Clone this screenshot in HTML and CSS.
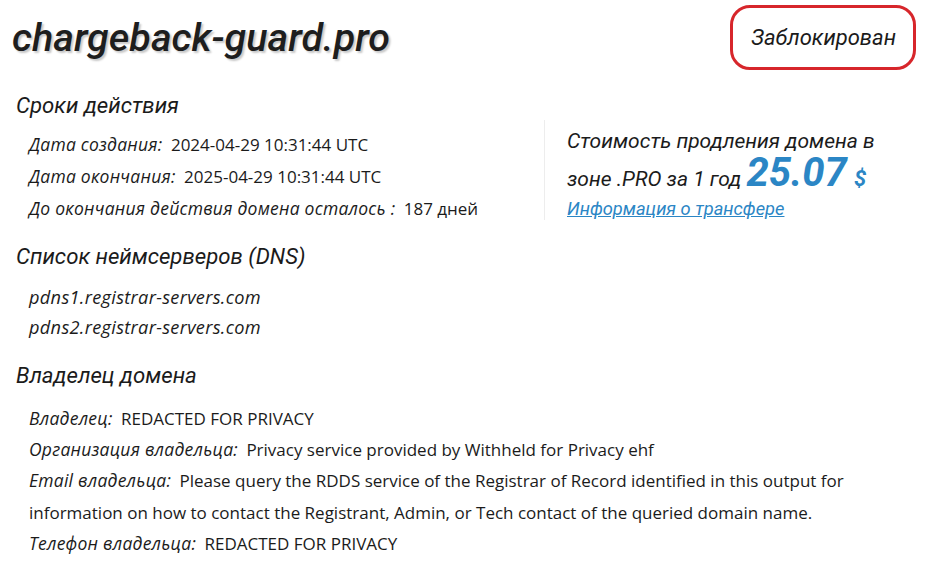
FILE: index.html
```html
<!DOCTYPE html>
<html lang="ru">
<head>
<meta charset="utf-8">
<title>chargeback-guard.pro</title>
<link rel="stylesheet" href="styles.css">
</head>
<body>
<div class="page">
  <header class="top">
    <h1 class="domain">chargeback-guard.pro</h1>
    <div class="status">Заблокирован</div>
  </header>

  <section class="terms">
    <div class="terms-main">
      <h2 class="heading">Сроки действия</h2>
      <div class="rows">
        <div class="row"><span class="label">Дата создания:</span> <span class="value">2024-04-29 10:31:44 UTC</span></div>
        <div class="row"><span class="label">Дата окончания:</span> <span class="value">2025-04-29 10:31:44 UTC</span></div>
        <div class="row"><span class="label">До окончания действия домена осталось :</span> <span class="value">187 дней</span></div>
      </div>
    </div>
    <aside class="price">
      <p class="price-text">Стоимость продления домена в зоне .PRO за 1 год <span class="amount">25.07</span> <span class="currency">$</span></p>
      <a class="transfer" href="#">Информация о трансфере</a>
    </aside>
  </section>

  <section class="block">
    <h2 class="heading">Список неймсерверов (DNS)</h2>
    <div class="rows ns">
      <div class="row label">pdns1.registrar-servers.com</div>
      <div class="row label">pdns2.registrar-servers.com</div>
    </div>
  </section>

  <section class="block owner-block">
    <h2 class="heading">Владелец домена</h2>
    <div class="rows owner">
      <div class="row"><span class="label">Владелец:</span> <span class="value">REDACTED FOR PRIVACY</span></div>
      <div class="row"><span class="label">Организация владельца:</span> <span class="value">Privacy service provided by Withheld for Privacy ehf</span></div>
      <div class="row"><span class="label">Email владельца:</span> <span class="value">Please query the RDDS service of the Registrar of Record identified in this output for information on how to contact the Registrant, Admin, or Tech contact of the queried domain name.</span></div>
      <div class="row"><span class="label">Телефон владельца:</span> <span class="value">REDACTED FOR PRIVACY</span></div>
    </div>
  </section>
</div>
</body>
</html>
```
FILE: styles.css
```css
* { box-sizing: border-box; }
html, body { margin: 0; padding: 0; background: #fff; }
body {
  color: #1b1b1b;
  font-family: "Open Sans", "DejaVu Sans", sans-serif;
  font-size: 17px;
}
.page { width: 946px; padding: 0 12px 0 12px; }

.top {
  display: flex;
  justify-content: space-between;
  align-items: center;
  padding-top: 5px;
  padding-right: 18px;
}
.domain {
  margin: 0;
  font-family: "Roboto", sans-serif;
  font-style: italic;
  font-weight: 500;
  font-size: 39.5px;
  line-height: 1;
  color: #1e1e1e;
  text-shadow: 2px 2px 2px rgba(0,0,0,0.22);
}
.status {
  height: 65px;
  padding: 0 17px 0 18px;
  display: flex;
  align-items: center;
  border: 3px solid #d7262b;
  border-radius: 20px;
  font-family: "Roboto", sans-serif;
  font-style: italic;
  font-size: 22px;
}

.heading {
  margin: 0;
  font-family: "Roboto", sans-serif;
  font-style: italic;
  font-weight: 400;
  font-size: 22.2px;
  line-height: 30px;
  padding-left: 4px;
}
.label {
  font-family: "Open Sans", sans-serif;
  font-style: italic;
  font-size: 17.5px;
  letter-spacing: 0.25px;
}
.row .label { line-height: 1; }
.rows { padding-left: 17px; }
.row { line-height: 32px; }
.value { padding-left: 4px; }

.terms {
  display: flex;
  margin-top: 20px;
}
.terms-main { width: 532px; }
.terms-main .rows { padding-top: 9px; }
.price {
  margin-top: 30px;
  height: 100px;
  border-left: 1px solid #ededed;
  padding-left: 22px;
  padding-top: 4px;
}
.price-text {
  margin: 0;
  width: 340px;
  font-family: "Roboto", sans-serif;
  font-style: italic;
  font-size: 21px;
  line-height: 34px;
}
.amount {
  color: #2b86c5;
  font-weight: 700;
  font-size: 40px;
  line-height: 30px;
}
.currency {
  color: #2b86c5;
  font-weight: 700;
  font-size: 22px;
  padding-left: 2px;
}
.transfer {
  display: block;
  margin-top: 1px;
  color: #2b86c5;
  font-family: "Roboto", sans-serif;
  font-style: italic;
  font-size: 18.3px;
  line-height: 24px;
}

.block { margin-top: 16px; }
.ns { padding-top: 11px; }
.ns .row { line-height: 30px; font-size: 18.2px; letter-spacing: 0.3px; }
.owner-block { margin-top: 18px; }
.owner { padding-top: 13px; max-width: 850px; }
.owner .row { line-height: 31.2px; }
```
